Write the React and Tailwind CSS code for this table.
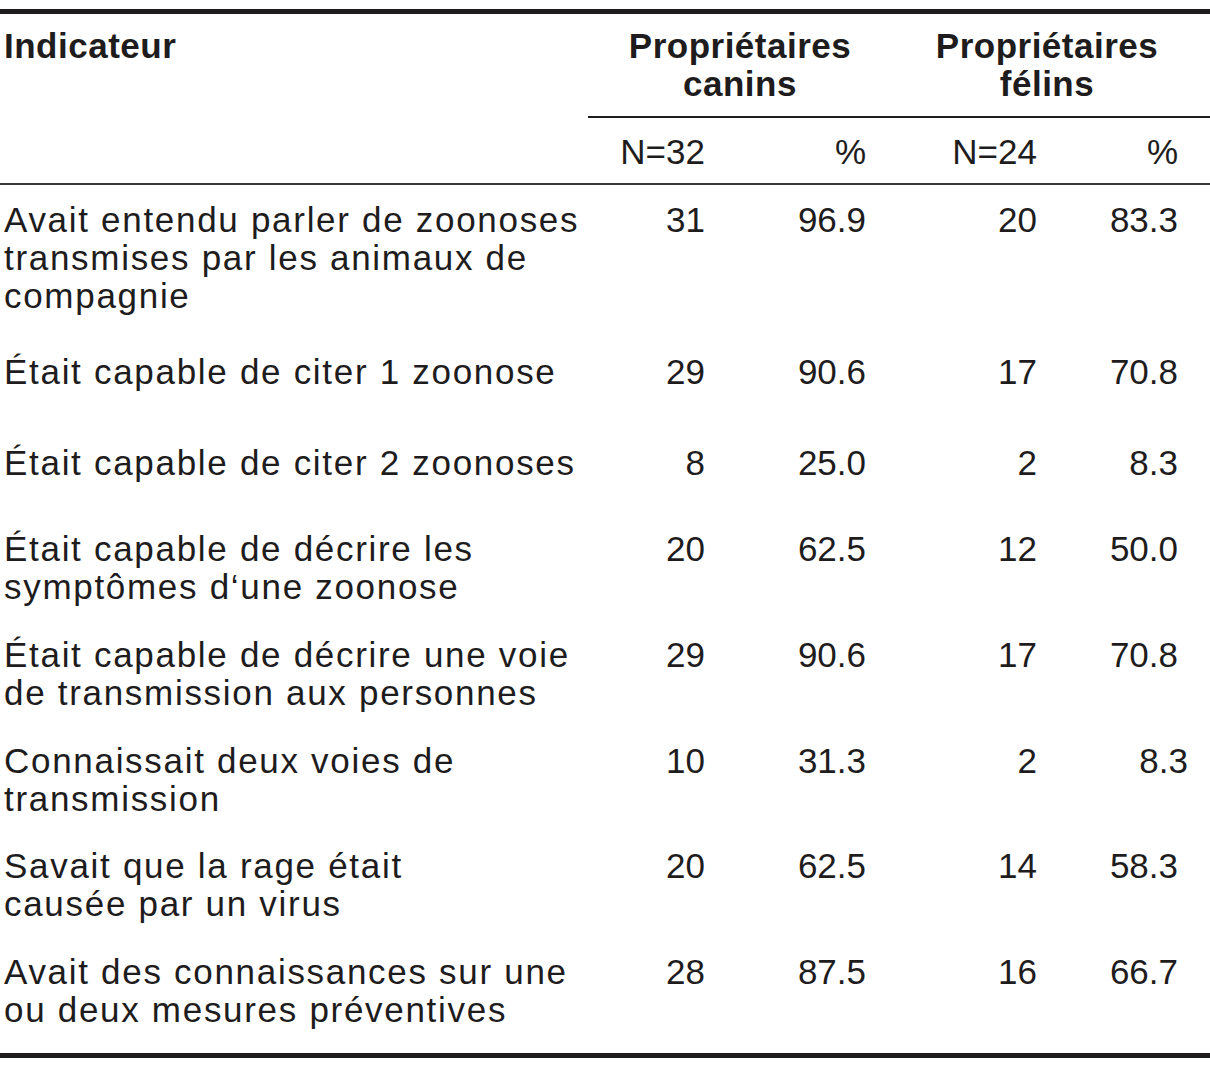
import React from 'react'

const rows = [
  { label: ['Avait entendu parler de zoonoses', 'transmises par les animaux de', 'compagnie'], v: ['31', '96.9', '20', '83.3'], pad: 'pt-[16px]' },
  { label: ['Était capable de citer 1 zoonose'], v: ['29', '90.6', '17', '70.8'], pad: 'pt-[38px]' },
  { label: ['Était capable de citer 2 zoonoses'], v: ['8', '25.0', '2', '8.3'], pad: 'pt-[53px]' },
  { label: ['Était capable de décrire les', 'symptômes d\u2018une zoonose'], v: ['20', '62.5', '12', '50.0'], pad: 'pt-[48px]' },
  { label: ['Était capable de décrire une voie', 'de transmission aux personnes'], v: ['29', '90.6', '17', '70.8'], pad: 'pt-[30px]' },
  { label: ['Connaissait deux voies de', 'transmission'], v: ['10', '31.3', '2', '8.3'], pad: 'pt-[30px]', lastW: 'w-[151px]' },
  { label: ['Savait que la rage était', 'causée par un virus'], v: ['20', '62.5', '14', '58.3'], pad: 'pt-[29px]' },
  { label: ['Avait des connaissances sur une', 'ou deux mesures préventives'], v: ['28', '87.5', '16', '66.7'], pad: 'pt-[30px]' },
]

export default function App() {
  return (
    <div className="w-[1210px] h-[1080px] bg-white text-[#1e1c1d] text-[35px] leading-[38px] font-['Liberation_Sans',Arial,sans-serif]">
      <div className="h-[9px]" />
      <div className="h-[5px] bg-[#1e1c1d]" />

      {/* group headers */}
      <div className="flex pt-[13px] pb-[13px] font-bold tracking-[0.5px]">
        <div className="w-[588px] pl-[4px]">Indicateur</div>
        <div className="w-[304px] text-center">Propriétaires<br />canins</div>
        <div className="w-[310px] text-center">Propriétaires<br />félins</div>
      </div>
      <div className="flex">
        <div className="w-[588px]" />
        <div className="flex-1 h-[2px] bg-[#1e1c1d]" />
      </div>

      <div className="flex pt-[15px] pb-[12px]">
        <div className="w-[588px]" />
        <div className="w-[117px] text-right">N=32</div>
        <div className="w-[161px] text-right">%</div>
        <div className="w-[171px] text-right">N=24</div>
        <div className="w-[141px] text-right">%</div>
      </div>
      <div className="h-[2px] bg-[#3a3839]" />

      {rows.map((r, i) => (
        <div key={i} className={`flex ${r.pad}`}>
          <div className="w-[588px] pl-[4px] tracking-[1.7px]">
            {r.label.map((l, j) => (
              <div key={j}>{l}</div>
            ))}
          </div>
          <div className="w-[117px] text-right">{r.v[0]}</div>
          <div className="w-[161px] text-right">{r.v[1]}</div>
          <div className="w-[171px] text-right">{r.v[2]}</div>
          <div className={`${r.lastW || 'w-[141px]'} text-right`}>{r.v[3]}</div>
        </div>
      ))}

      <div className="h-[24px]" />
      <div className="h-[5px] bg-[#1e1c1d]" />
    </div>
  )
}
